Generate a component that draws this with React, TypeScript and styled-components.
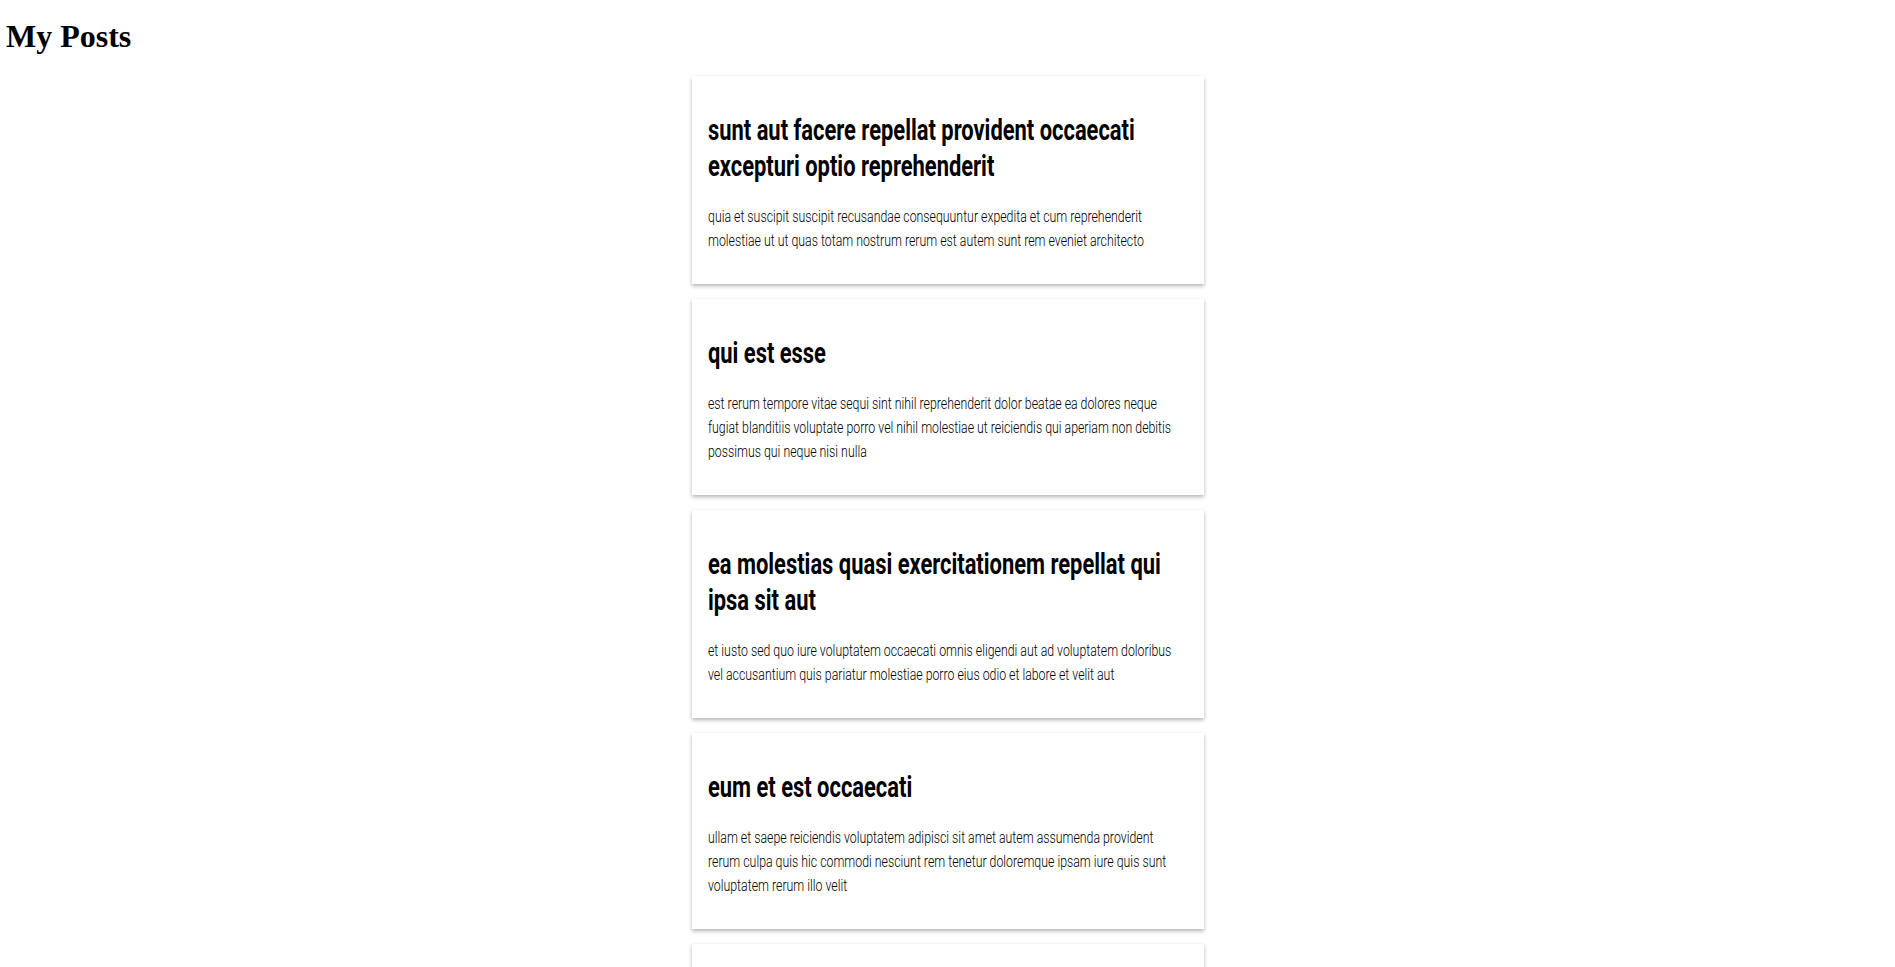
import styled, { createGlobalStyle } from "styled-components";

// Oswald isn't installed, so Roboto is squeezed horizontally to get its narrow look
const TITLE_SCALE = 0.73;
const BODY_SCALE = 0.725;

const GlobalStyle = createGlobalStyle`
  body {
    margin: 0;
    background: #fff;
  }
`;

const PageTitle = styled.h1`
  font-family: "Liberation Serif", "Times New Roman", serif;
  font-size: 32px;
  font-weight: 700;
  margin: 18px 6px 21px;
`;

const List = styled.div`
  width: 512px;
  margin: 0 auto;
  display: flex;
  flex-direction: column;
  gap: 15px;
  padding-bottom: 20px;
`;

const Card = styled.div`
  box-sizing: border-box;
  background: #fff;
  padding: 16px;
  box-shadow: 0 2px 4px rgba(0, 0, 0, 0.3);
  font-family: Roboto, "Liberation Sans", sans-serif;
  overflow: hidden;
`;

const Title = styled.h2`
  width: ${100 / TITLE_SCALE}%;
  transform: scaleX(${TITLE_SCALE});
  transform-origin: left top;
  font-size: 30px;
  font-weight: 700;
  line-height: 36px;
  margin: 20px 0;
  color: #000;
`;

const Body = styled.p`
  width: ${100 / BODY_SCALE}%;
  transform: scaleX(${BODY_SCALE});
  transform-origin: left top;
  font-size: 17px;
  font-weight: 300;
  line-height: 24px;
  margin: 16px 0;
  color: #000;
`;

const posts = [
  {
    id: 1,
    title: "sunt aut facere repellat provident occaecati excepturi optio reprehenderit",
    body: "quia et suscipit suscipit recusandae consequuntur expedita et cum reprehenderit molestiae ut ut quas totam nostrum rerum est autem sunt rem eveniet architecto",
  },
  {
    id: 2,
    title: "qui est esse",
    body: "est rerum tempore vitae sequi sint nihil reprehenderit dolor beatae ea dolores neque fugiat blanditiis voluptate porro vel nihil molestiae ut reiciendis qui aperiam non debitis possimus qui neque nisi nulla",
  },
  {
    id: 3,
    title: "ea molestias quasi exercitationem repellat qui ipsa sit aut",
    body: "et iusto sed quo iure voluptatem occaecati omnis eligendi aut ad voluptatem doloribus vel accusantium quis pariatur molestiae porro eius odio et labore et velit aut",
  },
  {
    id: 4,
    title: "eum et est occaecati",
    body: "ullam et saepe reiciendis voluptatem adipisci sit amet autem assumenda provident rerum culpa quis hic commodi nesciunt rem tenetur doloremque ipsam iure quis sunt voluptatem rerum illo velit",
  },
  {
    id: 5,
    title: "nesciunt quas odio",
    body: "repudiandae veniam quaerat sunt sed alias aut fugiat sit autem sed est voluptatem omnis possimus esse voluptatibus quis est aut tenetur dolor neque",
  },
  {
    id: 6,
    title: "dolorem eum magni eos aperiam quia",
    body: "ut aspernatur corporis harum nihil quis provident sequi mollitia nobis aliquid molestiae perspiciatis et ea nemo ab reprehenderit accusantium quas voluptate dolores velit et doloremque molestiae",
  },
];

function App() {
  return (
    <>
      <GlobalStyle />
      <PageTitle>My Posts</PageTitle>
      <List>
        {posts.map((post) => (
          <Card key={post.id}>
            <Title>{post.title}</Title>
            <Body>{post.body}</Body>
          </Card>
        ))}
      </List>
    </>
  );
}

export default App;
